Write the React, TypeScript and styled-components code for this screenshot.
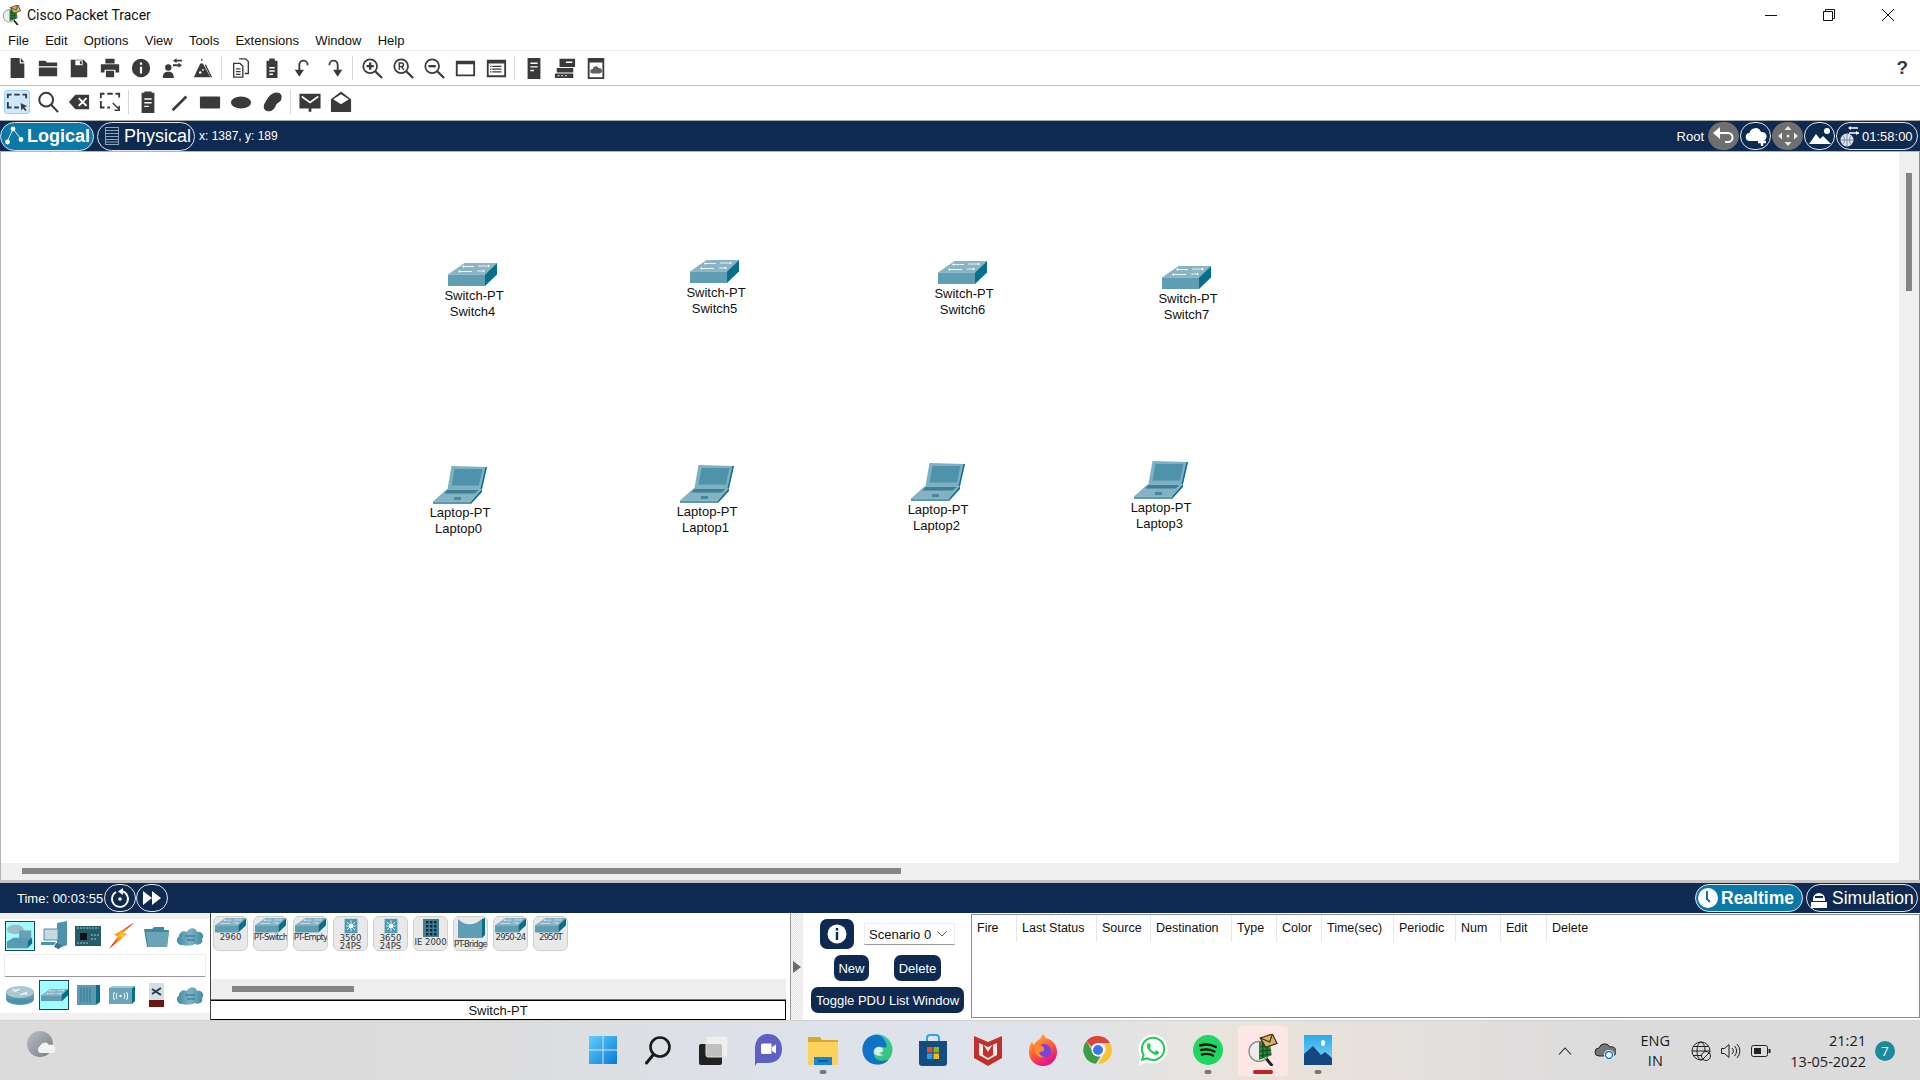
import React from 'react'
import styled, { createGlobalStyle } from 'styled-components'
import { FaWhatsapp } from 'react-icons/fa'

const NAVY = '#0f2a50'
const INK = '#3a3a3a'

const GlobalStyle = createGlobalStyle`
    html, body { margin: 0; padding: 0; background: #fff; }
    body { font-family: "Liberation Sans", Arial, sans-serif; color: #111; }
`

const BlockSvg = styled.svg`
    display: block;
`

const RackGlyph = styled.svg`
    margin: 0 2px 0 3px;
`

/* toolbar glyphs, drawn on a 24x24 grid */
const stroke = { fill: 'none', stroke: 'currentColor', strokeWidth: 2 }
const glyphs: Record<string, React.ReactNode> = {
    new: <path d="M5 1h10v6h5v16H5zM16.2 1l3.8 4.6h-3.800z" />,
    open: <path d="M2 4h7l2 2h11v4H2zM2 11.5h20V21H2z" />,
    save: <path fillRule="evenodd" d="M3 3h14l4 4v15H3zM8 3.5V9h8V3.5zM13 4.5h2V8h-2z" />,
    print: <path d="M7 2h10v5H7zM2 8h20v9h-4v-3H6v3H2zM7.5 15h9v7h-9z" />,
    info: <path fillRule="evenodd" d="M12 2a10 10 0 1 0 0 20 10 10 0 0 0 0-20zM10.8 6h2.4v2.4h-2.4zM10.8 10.5h2.4V18h-2.4z" />,
    pdu: <path d="M8 8a3.4 3.4 0 1 1 0 7 3.4 3.4 0 0 1 0-7zM2 23c0-5 2-7 6-7s6 2 6 7zM13 4l4-2.6V3h6v2h-6v1.6zM23 9l-4-2.6V8h-6v2h6v1.6z" />,
    flask: <><path d="M9 7h3l8 15H2z" /><path d="M10 1.5l2 1.5-2 1.5zM15 8l7 14h-1.6l-6.4-13z" /><circle cx="9" cy="17" r="1.4" fill="#fff" /><circle cx="12" cy="14" r="1" fill="#fff" /></>,
    copy: <g {...stroke} strokeWidth={1.5}><path d="M10 2h7l3 3v13h-4" /><path d="M4 7h7l3 3v12H4z" /><path d="M6.5 13h5M6.5 16h5M6.5 19h5" /></g>,
    paste: <path fillRule="evenodd" d="M6 4h3V1.5h6V4h3v19H6zM9 11v1.5h6V11zM9 14.5V16h6v-1.5zM9 18v1.5h4V18z" />,
    undo: <><path {...stroke} d="M17 9a4.5 4.5 0 0 0-9-1v8" /><path d="M3 14h10l-5 7.5z" /></>,
    redo: <><path {...stroke} d="M7 9a4.5 4.5 0 0 1 9-1v8" /><path d="M11 14h10l-5 7.5z" /></>,
    zoomIn: <g {...stroke} strokeWidth={1.9}><circle cx="10" cy="10" r="7.5" /><path d="M15.5 15.5L23 23" strokeWidth={2.4} /><path d="M6 10h8M10 6v8" strokeWidth={2.6} /></g>,
    zoomReset: <g {...stroke} strokeWidth={1.9}><circle cx="10" cy="10" r="7.5" /><path d="M15.5 15.5L23 23" strokeWidth={2.4} /><path d="M8 14V6.5h2.5a2 2 0 0 1 0 4H8M10.5 10.5L13 14" strokeWidth={1.6} /></g>,
    zoomOut: <g {...stroke} strokeWidth={1.9}><circle cx="10" cy="10" r="7.5" /><path d="M15.5 15.5L23 23" strokeWidth={2.4} /><path d="M6 10h8" strokeWidth={2.6} /></g>,
    window: <path fillRule="evenodd" d="M2 4h21v17H2zM4 8v11h17V8z" />,
    listWindow: <path fillRule="evenodd" d="M2 3h21v19H2zM4 7v13h17V7zM8 9.5h10V11H8zM8 12.5h10V14H8zM8 15.5h10V17H8zM5.5 9.5H7V11H5.5zM5.5 12.5H7V14H5.5zM5.5 15.5H7V17H5.5z" />,
    rack: <path fillRule="evenodd" d="M5 1h14v23H5zM8 6v1.5h8V6zM8 10v1.5h8V10zM8 14v1.5h4V14z" />,
    devices: <path fillRule="evenodd" d="M6 2h17v9H6zM13 5v1.5h7V5zM3 12h18v5H3zM1 18h20v5H1zM4 20v1h2v-1zM8 20v1h2v-1zM12 20v1h2v-1z" />,
    cloudPic: <><path fillRule="evenodd" d="M3 1h18v23H3zM5 6v16h14V6z" /><path d="M8 18a2.5 2.5 0 0 1 .5-5 3.5 3.5 0 0 1 6.5-1 3 3 0 0 1 1 6z" opacity={0.8} /></>,
    select: <g {...stroke} strokeWidth={2}><path d="M2 8V4h4M9 4h6M18 4h4v4M2 12v6h4M9 18h5" /><path d="M16 13l7 3.5-3 1.2 2.4 3-1.5 1.2-2.4-3-1.8 2.5z" fill="currentColor" stroke="none" /></g>,
    search: <g {...stroke} strokeWidth={2.2}><circle cx="10" cy="9.5" r="7.5" /><path d="M15.5 15L23 23" /></g>,
    erase: <path fillRule="evenodd" d="M8 4h15v16H8L1 12zM11 8.5l3.5 3.5L11 15.5l1.5 1.5 3.5-3.5 3.5 3.5 1.5-1.5-3.5-3.5L21 8.5 19.5 7 16 10.5 12.5 7z" />,
    resize: <g {...stroke} strokeWidth={2}><path d="M2 8V3h4M9 3h6M18 3h4v4M2 11v7h4M9 18h3" /><path d="M15 13l7 7M22 16v5h-5" strokeWidth={1.6} /></g>,
    note: <path fillRule="evenodd" d="M5 2h3V.5h8V2h3v22H5zM8 8v1.5h8V8zM8 12v1.5h8V12zM8 16v1.5h5V16z" />,
    line: <path d="M4 20L19 5l2 2L6 22z" />,
    rect: <rect x="1" y="6" width="22" height="13" rx="1" />,
    ellipse: <ellipse cx="12" cy="12.5" rx="11" ry="6.5" />,
    free: <path d="M15 2c6-1.5 9 3 7 7.5-1.5 3-4.5 3-6 6.5-1.500 4-5 7-9 6-4.500-1-5-6-2.500-9.500C7 9 9 3.500 15 2z" />,
    mailClosed: <><path d="M.5 3h23v16h-10v3.5h-3V19H.5z" /><path d="M3 6l9 6.5L21 6" fill="none" stroke="#fff" strokeWidth="1.800" /></>,
    mailOpen: <><path d="M12 .5L23 9v14H1V9z" /><path d="M12 3.5L20.5 9 12 14.5 3.5 9z" fill="#fff" /></>,
}

const topTools = ['new', 'open', 'save', 'print', 'info', 'pdu', 'flask', '|', 'copy', 'paste', 'undo', 'redo', '|', 'zoomIn', 'zoomReset', 'zoomOut', 'window', 'listWindow', '|', 'rack', 'devices', 'cloudPic']
const drawTools = ['select', 'search', 'erase', 'resize', '|', 'note', 'line', 'rect', 'ellipse', 'free', '|', 'mailClosed', 'mailOpen']

const PacketTracerLogo = ({ size }: { size: number }) => (
    <svg width={size} height={size} viewBox="0 0 24 24">
        <path d="M14 18l5 6" stroke="#222" strokeWidth="2.2" />
        <circle cx="9" cy="13" r="7.5" fill="#ececec" stroke="#8a8a8a" />
        <path d="M9 6l8-1.5 1.5 11.5-9.5 3.5z" fill="#2f8a2d" />
        <path d="M9.5 9.5l8-1M9.5 13l8.5-1M9.5 16.5l8.5-1.5M12 6v12M15 5.5v11" stroke="#143" strokeWidth=".8" />
        <path d="M10 3l9-3 3.5 7-8.5 3z" fill="#d8b266" stroke="#3d2d0e" strokeWidth=".9" />
        <path d="M10 3l7 3 2-6" fill="none" stroke="#3d2d0e" strokeWidth=".9" />
    </svg>
)

const SwitchIcon = ({ width }: { width: number }) => (
    <BlockSvg width={width} height={width * 23 / 49} viewBox="0 0 49 23">
        <path d="M0 11.5L16.5 0H49L37 11.5z" fill="#8ab4c4" />
        <path d="M0 11.5h37V23H0z" fill="#5f9db3" />
        <path d="M37 11.5L49 0v11.5L37 23z" fill="#056f8c" />
        <path d="M16 3.5h10M30 3h10M12 8.5h12M29 8h6" stroke="#e8f3f6" strokeWidth="1" />
        <path d="M40 1.5l2 1.5-2 1.5zM16 2l-2 1.5L16 5zM12 7l-2 1.5 2 1.5zM35 6.5l2 1.5-2 1.5z" fill="#fff" />
    </BlockSvg>
)

const LaptopIcon = () => (
    <BlockSvg width="54" height="38" viewBox="0 0 54 38">
        <path d="M18.5 0L54 1l-5 22H14.5z" fill="#7fb0c1" />
        <path d="M54 1l-5 22h-1.5L52.5 1z" fill="#0c6f8b" />
        <path d="M21.5 3h28l-3.5 16.5H18.5z" fill="#4f93ab" />
        <path d="M14 23h35L38 35.5H0z" fill="#83b3c3" />
        <path d="M14.5 24h31l-3.5 3.5H11z" fill="#3d7f96" />
        <path d="M21 31h7v3h-7z" fill="#49879c" />
        <path d="M0 35.5h38V38H0z" fill="#5b98ae" />
        <path d="M38 35.5L49 23v3L38 38z" fill="#0c6f8b" />
    </BlockSvg>
)

const ChipIcon = ({ dark }: { dark?: boolean }) => (
    <BlockSvg width="20" height="20" viewBox="0 0 20 20">
        <rect x="2" y="1" width="16" height="18" fill={dark ? '#3f7f94' : '#4f9bb5'} />
        {dark
            ? [4, 8, 12, 16].map((y) => [5, 9, 13].map((x) => <rect key={`${x}-${y}`} x={x} y={y - 1} width="2.4" height="2.4" fill="#123" />))
            : <path d="M10 3v14M4 10h12M5 5l10 10M15 5L5 15" stroke="#dff1f6" strokeWidth="1.2" />}
        {!dark && <circle cx="10" cy="10" r="2.4" fill="#fff" />}
    </BlockSvg>
)

const CloudShape = () => (
    <BlockSvg width="28" height="19" viewBox="0 0 28 19">
        <defs>
            <linearGradient id="cloudFill" x1="0" x2="1">
                <stop offset="0" stopColor="#3f8ba5" />
                <stop offset=".5" stopColor="#7fb2c3" />
                <stop offset="1" stopColor="#3f8ba5" />
            </linearGradient>
        </defs>
        <path d="M6 18C1 18-1 12 3 9.5 3 5 8 3 11 5c2-5 9-5 10 0 5-1 8 4 5 7 2 4-3 7-7 5-3 2-9 2-13 1z" fill="url(#cloudFill)" />
        <path d="M9 9h10M11 13h8" stroke="#2b7088" strokeWidth="1" />
    </BlockSvg>
)

const categoryRowOne: React.ReactNode[] = [
    <svg width="28" height="28" viewBox="0 0 30 30"><ellipse cx="10" cy="8" rx="9" ry="5" fill="#9dbcc8" /><rect x="14" y="9" width="13" height="11" fill="#6aa2b5" /><path d="M1 21l7-4h20l-5 4v7H1z" fill="#5b9ab1" /><path d="M23 21l5-4v6l-5 5z" fill="#0a6d89" /></svg>,
    <svg width="28" height="30" viewBox="0 0 28 30"><path d="M17 2l10-2v24l-10 4z" fill="#4f93ab" /><path d="M4 8h14v11H4z" fill="#c5dbe3" stroke="#4d8ca2" /><path d="M1 21h15l-2 3H1z" fill="#4f93ab" /><path d="M16 22l6 2-3 4-5-2z" fill="#2c7a93" /></svg>,
    <svg width="26" height="20" viewBox="0 0 26 20"><rect width="26" height="20" fill="#255c68" /><rect x="5" y="7" width="7" height="7" fill="#111" /><path d="M2 2h22M2 17h12M16 9h8M16 13h6" stroke="#8fc7d6" strokeWidth="1" strokeDasharray="2 1" /></svg>,
    <svg width="28" height="28" viewBox="0 0 28 28"><defs><radialGradient id="bolt"><stop offset="0" stopColor="#ffd21f" /><stop offset="1" stopColor="#f02a12" /></radialGradient></defs><path d="M27 0L15 11l4 1L1 27l9-13-4-1z" fill="url(#bolt)" /></svg>,
    <svg width="27" height="21" viewBox="0 0 27 21"><path d="M1 3h8l2-2h10v3h5l-2 17H4z" fill="#3e8aa4" /><path d="M3 6h23l-2 15H5z" fill="#6ba3b7" /></svg>,
    <CloudShape />,
]

const categoryRowTwo: React.ReactNode[] = [
    <svg width="28" height="19" viewBox="0 0 28 19"><ellipse cx="14" cy="13" rx="14" ry="6" fill="#4f93ab" /><rect y="6" width="28" height="7" fill="#5f9db3" /><ellipse cx="14" cy="6" rx="14" ry="6" fill="#a9c8d3" /><path d="M8 6l6-3M14 9l7-3M6 4h5M17 8h5" stroke="#fff" strokeWidth="1" /></svg>,
    <SwitchIcon width={27} />,
    <svg width="23" height="20" viewBox="0 0 23 20"><rect width="19" height="20" y="0" fill="#5b9ab1" /><path d="M19 0l4-1v18l-4 3z" fill="#0a6d89" /><path d="M4 3v14M7 3v14M10 3v14M13 3v14" stroke="#2c7a93" strokeWidth="1" /></svg>,
    <svg width="26" height="18" viewBox="0 0 26 18"><rect y="2" width="23" height="16" fill="#6ba3b7" /><path d="M23 2l3-2v15l-3 3z" fill="#0a6d89" /><path d="M0 2l3-2h23l-3 2z" fill="#a3c5d1" /><circle cx="11.5" cy="10" r="1.2" fill="#fff" /><path d="M8 7c-1 2-1 4 0 6M15 7c1 2 1 4 0 6M5.5 6c-1.5 2.5-1.5 5.5 0 8M17.5 6c1.5 2.5 1.5 5.5 0 8" stroke="#fff" fill="none" /></svg>,
    <svg width="15" height="24" viewBox="0 0 15 24"><rect width="15" height="17" fill="#cfe0e6" /><rect y="17" width="15" height="7" fill="#6b1512" /><path d="M3 6l9 6M3 11l9-6" stroke="#334" strokeWidth="2" /></svg>,
    <CloudShape />,
]

type Device = { label: string; kind: 'switch' | 'chip' | 'ie' | 'bridge'; tight?: boolean }
const devices: Device[] = [
    { label: '2960', kind: 'switch' },
    { label: 'PT-Switch', kind: 'switch', tight: true },
    { label: 'PT-Empty', kind: 'switch', tight: true },
    { label: '3560\n24PS', kind: 'chip' },
    { label: '3650\n24PS', kind: 'chip' },
    { label: 'IE 2000', kind: 'ie' },
    { label: 'PT-Bridge', kind: 'bridge', tight: true },
    { label: '2950-24', kind: 'switch', tight: true },
    { label: '2950T', kind: 'switch', tight: true },
]

const pduColumns: [string, number][] = [
    ['Fire', 45], ['Last Status', 80], ['Source', 54], ['Destination', 81], ['Type', 45], ['Color', 45],
    ['Time(sec)', 72], ['Periodic', 62], ['Num', 45], ['Edit', 46], ['Delete', 60],
]

function WhatsappMark({ children }: { children: React.ReactNode }) {
    return (
        <svg width="30" height="32" viewBox="0 0 30 32">
            <circle cx="15" cy="15" r="14.5" fill="#fff" />
            <path d="M3 22l-2 9 9-3z" fill="#fff" />
            <foreignObject x="1" y="1" width="28" height="28">{children}</foreignObject>
        </svg>
    )
}

const taskIcons: { icon: React.ReactNode; dot?: boolean; active?: boolean }[] = [
    { icon: <svg width="30" height="30" viewBox="0 0 30 30"><defs><linearGradient id="win" x1="0" y1="0" x2="1" y2="1"><stop offset="0" stopColor="#5fd0fb" /><stop offset="1" stopColor="#0a7ad8" /></linearGradient></defs><path d="M1 1h13.5v13.5H1zM15.5 1H29v13.5H15.5zM1 15.5h13.5V29H1zM15.5 15.5H29V29H15.5z" fill="url(#win)" /></svg> },
    { icon: <svg width="30" height="30" viewBox="0 0 30 30"><circle cx="17" cy="12" r="9.5" fill="none" stroke="#1a1a1a" strokeWidth="2.6" /><path d="M10.5 19.5L3.5 28" stroke="#1a1a1a" strokeWidth="3" strokeLinecap="round" /></svg> },
    { icon: <svg width="30" height="30" viewBox="0 0 30 30"><rect x="1" y="9" width="23" height="21" rx="2" fill="#222" /><rect x="8" y="1" width="22" height="21" rx="2" fill="#f4f4f4" fillOpacity=".75" stroke="#ddd" /></svg> },
    { icon: <svg width="30" height="32" viewBox="0 0 30 32"><path d="M15 0c8 0 14 6 14 15s-6 14-14 14H4l-2 3V15C2 6 7 0 15 0z" fill="#5f5fc4" /><path d="M8 11a1.5 1.5 0 0 1 1.5-1.5h9V20h-9A1.5 1.5 0 0 1 8 18.5zM19 13l4-2.5v9L19 17z" fill="#fff" /></svg> },
    { icon: <svg width="30" height="30" viewBox="0 0 30 30"><path d="M0 2h12l2 3h16v7H0z" fill="#dca531" /><path d="M0 7h30v23H0z" fill="#fbd35a" /><rect x="6" y="22" width="18" height="8" fill="#1683d8" /><rect x="10" y="25" width="10" height="2" fill="#0c5f9f" /></svg>, dot: true },
    { icon: <svg width="31" height="31" viewBox="0 0 31 31"><defs><linearGradient id="edge" x1="0" y1="0" x2="1" y2="1"><stop offset="0" stopColor="#3fd3c0" /><stop offset="1" stopColor="#36c06a" /></linearGradient></defs><circle cx="15.5" cy="15.5" r="15" fill="url(#edge)" /><path d="M15.5 .5C7 .5 .5 7 .5 15.5c0 9 7 15 15 15 5 0 9-2 11-5-6 3-14 1-15-6-1-5 3-7 6-7 3 0 6 2 7 0 1-3-4-12-9.5-12z" fill="#0f74c8" /><path d="M12 18c0-4 3-5 5-5s4 1 4 3-2 3-4 3c1 1 3 2 5 2-5 2-10 0-10-3z" fill="#d9f1f4" /></svg> },
    { icon: <svg width="30" height="32" viewBox="0 0 30 32"><path d="M9 7V4a3 3 0 0 1 3-3h6a3 3 0 0 1 3 3v3" fill="none" stroke="#2ba8e0" strokeWidth="2" /><path d="M1 7h28v22a3 3 0 0 1-3 3H4a3 3 0 0 1-3-3z" fill="#144b80" /><path d="M9 13h5.5v5.5H9z" fill="#ea4c24" /><path d="M15.5 13H21v5.5h-5.5z" fill="#7db923" /><path d="M9 19.5h5.5V25H9z" fill="#1ea3e0" /><path d="M15.5 19.5H21V25h-5.5z" fill="#fcb712" /></svg> },
    { icon: <svg width="28" height="32" viewBox="0 0 28 32"><path d="M0 2l14 6 14-6v22l-14 8L0 24z" fill="#c3302a" /><path d="M5 9l9 4 9-4v12l-9 5-9-5z" fill="#f0ece8" /><path d="M9 10l5 8 5-8v11l-5 3-5-3z" fill="#c3302a" /></svg> },
    { icon: <svg width="30" height="32" viewBox="0 0 30 32"><defs><linearGradient id="fox" x1="0" y1="0" x2=".5" y2="1"><stop offset="0" stopColor="#ffc22d" /><stop offset=".6" stopColor="#ff5a35" /><stop offset="1" stopColor="#e31587" /></linearGradient></defs><path d="M15 4c8 0 14 6 14 14s-6 14-14 14S1 26 1 18c0-4 1-8 3-10l2 3c1-3 4-5 6-6l3-5 3 4z" fill="url(#fox)" /><circle cx="16" cy="17" r="7" fill="#7542e5" /><path d="M7 12c3-2 8-1 9 2s-2 4-4 4 1 5 5 5c-6 2-12-3-10-11z" fill="#ff8a2d" /></svg> },
    { icon: <svg width="30" height="30" viewBox="0 0 30 30"><path d="M15 1a14 14 0 0 1 12 7H15a7 7 0 0 0-6.5 4L3.5 6A14 14 0 0 1 15 1z" fill="#dc4437" /><path d="M27 8a14 14 0 0 1-12 21l6-10a7 7 0 0 0-1-11z" fill="#fbc02d" /><path d="M3.5 6l6 10a7 7 0 0 0 8 5.5L13 28.8A14 14 0 0 1 3.5 6z" fill="#3e9b47" /><circle cx="15" cy="15" r="6.5" fill="#fff" /><circle cx="15" cy="15" r="5" fill="#3b78e7" /></svg> },
    { icon: <WhatsappMark><FaWhatsapp size={28} color="#25c955" /></WhatsappMark> },
    { icon: <svg width="30" height="30" viewBox="0 0 30 30"><circle cx="15" cy="15" r="15" fill="#1ed760" /><path d="M7 10.5c5-1.5 11-1 16 1.5M8 15c4-1 9-.8 13.5 1.5M9 19.5c4-1 8-.6 11 1" fill="none" stroke="#111" strokeWidth="2.4" strokeLinecap="round" /></svg>, dot: true },
    { icon: <PacketTracerLogo size={32} />, active: true },
    { icon: <svg width="28" height="30" viewBox="0 0 28 30"><defs><linearGradient id="sky" x1="0" y1="0" x2="0" y2="1"><stop offset="0" stopColor="#2aa9e8" /><stop offset="1" stopColor="#8ad8f5" /></linearGradient></defs><rect width="28" height="30" fill="url(#sky)" /><ellipse cx="19" cy="8" rx="2" ry="3" fill="#fff" /><path d="M0 30V19l9-8 8 9 4-3 7 6v7z" fill="#14487f" /></svg>, dot: true },
]

const Page = styled.div`
    width: 1920px;
    height: 1080px;
    display: flex;
    flex-direction: column;
    overflow: hidden;
    background: #fff;
`

const TitleBar = styled.div`
    height: 30px;
    display: flex;
    align-items: center;
    padding-left: 2px;
`

const TitleText = styled.span`
    margin-left: 5px;
    font: 14px Roboto, sans-serif;
    color: #111;
    flex: 1;
`

const WindowControl = styled.div`
    width: 58.5px;
    height: 30px;
    display: flex;
    align-items: center;
    justify-content: center;
    &:last-child { margin-right: 3px; }
`

const MenuBar = styled.div`
    height: 20px;
    display: flex;
    align-items: center;
    gap: 16.2px;
    padding-left: 8px;
    font-size: 13px;
    border-bottom: 1px solid #f0f0f0;
`

const Toolbar = styled.div<{ $height: number; $ruled?: boolean }>`
    height: ${(p) => p.$height}px;
    box-sizing: border-box;
    display: flex;
    align-items: center;
    padding-left: 1px;
    padding-bottom: ${(p) => (p.$ruled ? 0 : 2)}px;
    color: ${INK};
    border-bottom: ${(p) => (p.$ruled ? '1px solid #bdbdbd' : 'none')};
`

const ToolButton = styled.div<{ $active?: boolean }>`
    width: ${(p) => (p.$active ? 26 : 31)}px;
    height: ${(p) => (p.$active ? 24 : 28)}px;
    margin: 0 ${(p) => (p.$active ? 2.5 : 0)}px;
    box-sizing: border-box;
    display: flex;
    align-items: center;
    justify-content: center;
    border-radius: 3px;
    background: ${(p) => (p.$active ? '#cde8ff' : 'transparent')};
    border: 1px solid ${(p) => (p.$active ? '#99d1ff' : 'transparent')};
    svg { width: 22px; height: 22px; flex: none; fill: currentColor; }
`

const ToolRule = styled.div`
    width: 1px;
    height: 24px;
    background: #d5d5d5;
    margin: 0 3px;
`

const HelpMark = styled.span`
    margin-left: auto;
    margin-right: 12px;
    font: bold 19px "Liberation Sans", sans-serif;
    color: ${INK};
`

const NavBar = styled.div`
    height: 30px;
    background: ${NAVY};
    border-top: 1px solid #a9a9a9;
    border-bottom: 1px solid #b5b5b5;
    display: flex;
    align-items: center;
    gap: 3px;
    padding-right: 2px;
    color: #fff;
`

const ModePill = styled.div<{ $active?: boolean; $width: number }>`
    width: ${(p) => p.$width}px;
    height: 29px;
    box-sizing: border-box;
    display: flex;
    align-items: center;
    gap: 3px;
    padding-left: 4px;
    border-radius: 15px;
    border: 1px solid #dfe6ee;
    background: ${(p) => (p.$active ? '#0b78a8' : NAVY)};
    color: #fff;
    font-size: 18px;
    font-weight: ${(p) => (p.$active ? 700 : 400)};
    flex: none;
`

const CoordText = styled.span`
    margin-left: 1px;
    font-size: 12px;
    flex: 1;
`

const RootLabel = styled.span`
    font-size: 13px;
    margin-right: 3px;
`

const RoundButton = styled.div<{ $grey?: boolean }>`
    width: 31px;
    height: 28px;
    box-sizing: border-box;
    margin-left: -2px;
    display: flex;
    align-items: center;
    justify-content: center;
    border-radius: 14px;
    border: 1px solid ${(p) => (p.$grey ? '#6f6f6f' : '#dfe6ee')};
    background: ${(p) => (p.$grey ? '#6f6f6f' : NAVY)};
`

const ClockPill = styled.div`
    width: 82px;
    height: 28px;
    box-sizing: border-box;
    margin-left: -2px;
    display: flex;
    align-items: center;
    gap: 2px;
    padding-left: 3px;
    border-radius: 14px;
    border: 1px solid #dfe6ee;
    font-size: 13px;
`

const CanvasRow = styled.div`
    flex: 1;
    display: flex;
    min-height: 0;
`

const CanvasColumn = styled.div`
    flex: 1;
    display: flex;
    flex-direction: column;
    border-left: 1px solid #b5b5b5;
`

const Workspace = styled.div`
    flex: 1;
    position: relative;
`

const HScroll = styled.div`
    height: 17px;
    box-sizing: border-box;
    padding: 5px 0 0 21px;
    background: #f0f0f0;
`

const HThumb = styled.div`
    width: 879px;
    height: 6px;
    background: #858585;
`

const VScroll = styled.div`
    width: 21px;
    box-sizing: border-box;
    padding: 21px 0 0 7px;
    background: #f0f0f0;
    border-right: 1px solid #8c8c94;
`

const VThumb = styled.div`
    width: 6px;
    height: 118px;
    background: #858585;
`

const Node = styled.div<{ $x: number; $y: number }>`
    position: absolute;
    left: ${(p) => p.$x}px;
    top: ${(p) => p.$y}px;
    width: 100px;
    display: flex;
    flex-direction: column;
    align-items: center;
    font-size: 13px;
    line-height: 16px;
    color: #111;
`

const NodeGlyph = styled.div<{ $shift: number; $gap: number }>`
    margin-left: ${(p) => p.$shift}px;
    margin-bottom: ${(p) => p.$gap}px;
`

const NodeName = styled.span`
    margin-right: 3px;
`

const SimBar = styled.div`
    height: 30px;
    background: ${NAVY};
    border-top: 3px solid #c4c4c4;
    display: flex;
    align-items: center;
    padding: 0 2px 0 17px;
    color: #fff;
    font-size: 13px;
`

const SimClock = styled.span`
    margin-right: 1px;
`

const SimButton = styled.div`
    width: 32px;
    height: 28px;
    box-sizing: border-box;
    display: flex;
    align-items: center;
    justify-content: center;
    border-radius: 14px;
    border: 1px solid #dfe6ee;
`

const SimModes = styled.div`
    margin-left: auto;
    display: flex;
    gap: 3px;
`

const SimMode = styled(ModePill)`
    height: 28px;
    padding-left: 1px;
    gap: 2px;
    font-size: 17.5px;
`

const Panel = styled.div`
    height: 107px;
    display: flex;
    background: #fff;
`

const Picker = styled.div`
    width: 210px;
    box-sizing: border-box;
    padding: 6px 0 7px;
    background: #f0f0f0;
`

const PickerInner = styled.div`
    height: 94px;
    background: #fff;
    display: flex;
    flex-direction: column;
`

const CategoryRow = styled.div<{ $height: number }>`
    height: ${(p) => p.$height}px;
    display: flex;
    align-items: center;
    padding-left: 3px;
`

const CategoryCell = styled.div<{ $selected?: boolean }>`
    width: 34px;
    display: flex;
    justify-content: center;
    & > div {
        width: 30px;
        height: 30px;
        box-sizing: border-box;
        display: flex;
        align-items: center;
        justify-content: center;
        background: ${(p) => (p.$selected ? '#9ffcff' : 'transparent')};
        border: 1px solid ${(p) => (p.$selected ? '#1d4a55' : 'transparent')};
    }
`

const SearchSlot = styled.div`
    height: 23px;
    margin: 1px 4px 0;
    box-sizing: border-box;
    border: 1px solid #ececec;
    border-bottom: 1px solid #999;
    border-radius: 2px;
`

const DevicePanel = styled.div`
    width: 576px;
    display: flex;
    flex-direction: column;
    border-left: 1px solid #444;
    box-sizing: border-box;
`

const DeviceList = styled.div`
    height: 66px;
    box-sizing: border-box;
    padding: 3px 0 0 2px;
    display: flex;
    gap: 5px;
`

const DeviceCell = styled.div`
    width: 35px;
    height: 35px;
    box-sizing: border-box;
    border: 1px solid #cfcfcf;
    border-radius: 6px;
    background: #e9e9e9;
    display: flex;
    flex-direction: column;
    align-items: center;
    padding-top: 1px;
    overflow: hidden;
`

const DeviceLabel = styled.span<{ $tight?: boolean }>`
    font: 8.5px/7.5px "DejaVu Sans", sans-serif;
    letter-spacing: ${(p) => (p.$tight ? '-0.8px' : '0')};
    white-space: pre;
    text-align: center;
    color: #333;
    margin-top: 1px;
`

const DeviceScroll = styled.div`
    height: 21px;
    box-sizing: border-box;
    padding: 7px 0 0 21px;
    background: #eeeeee;
    border-bottom: 1px solid #777;
`

const DeviceThumb = styled.div`
    width: 122px;
    height: 6px;
    background: #858585;
`

const DeviceName = styled.div`
    height: 20px;
    box-sizing: border-box;
    border: 1px solid #000;
    border-left: none;
    text-align: center;
    font-size: 13px;
    line-height: 19px;
`

const Collapser = styled.div`
    width: 12px;
    margin-left: 4px;
    display: flex;
    align-items: center;
    justify-content: center;
    border-left: 1px solid #999;
    background: repeating-conic-gradient(#e4e4e4 0% 25%, #fafafa 0% 50%) 0 0 / 2px 2px;
`

const CollapseArrow = styled.div`
    width: 0;
    height: 0;
    border-left: 8px solid #6a6a6a;
    border-top: 6px solid transparent;
    border-bottom: 6px solid transparent;
    margin-top: 1px;
`

const ScenarioPanel = styled.div`
    width: 168px;
    box-sizing: border-box;
    padding-top: 6px;
    display: flex;
    flex-direction: column;
    gap: 6px;
`

const ScenarioTop = styled.div`
    display: flex;
    align-items: center;
    gap: 10px;
    padding-left: 17px;
    height: 30px;
`

const InfoButton = styled.div`
    width: 34px;
    height: 30px;
    border-radius: 7px;
    background: ${NAVY};
    display: flex;
    align-items: center;
    justify-content: center;
`

const ScenarioSelect = styled.div`
    width: 91px;
    height: 22px;
    box-sizing: border-box;
    border: 1px solid #ececec;
    border-bottom: 1px solid #999;
    display: flex;
    align-items: center;
    justify-content: space-between;
    padding: 0 7px 0 4px;
    font-size: 13px;
`

const ScenarioActions = styled.div`
    display: flex;
    gap: 25px;
    padding-left: 31px;
`

const PduButton = styled.div<{ $width: number; $left?: number }>`
    width: ${(p) => p.$width}px;
    height: 26px;
    margin-left: ${(p) => p.$left ?? 0}px;
    border-radius: 7px;
    background: ${NAVY};
    color: #fff;
    display: flex;
    align-items: center;
    justify-content: center;
    font-size: 13px;
`

const PduTable = styled.div`
    flex: 1;
    box-sizing: border-box;
    margin: 1px 0 2px;
    border: 1px solid #8c8c94;
`

const PduHead = styled.div`
    height: 27px;
    display: flex;
`

const PduCol = styled.div<{ $width: number }>`
    width: ${(p) => p.$width}px;
    box-sizing: border-box;
    padding: 6px 0 0 5px;
    font-size: 12.5px;
    color: #111;
    border-right: 1px solid #e8e8e8;
    white-space: nowrap;
    &:last-child { border-right: none; }
`

const Taskbar = styled.div`
    height: 60px;
    display: grid;
    grid-template-columns: 1fr auto 1fr;
    align-items: center;
    background: linear-gradient(90deg, #dbdbdb 0%, #dcdcdc 24%, #dde1e9 40%, #dfe3eb 54%, #ebe3da 66%, #e2dfde 76%, #dbdbdb 85%, #dbdbdb 100%);
    border-top: 1px solid #d2d2d2;
    box-sizing: border-box;
`

const Weather = styled.div`
    padding: 0 0 11px 27px;
    display: flex;
`

const TaskIcons = styled.div`
    display: flex;
`

const TaskItem = styled.div<{ $active?: boolean }>`
    position: relative;
    width: 55px;
    height: 50px;
    box-sizing: border-box;
    padding-bottom: 2px;
    display: flex;
    align-items: center;
    justify-content: center;
    &::before {
        content: '';
        position: absolute;
        inset: 0 2.5px;
        border-radius: 4px;
        background: ${(p) => (p.$active ? '#fce6e6' : 'transparent')};
    }
    & > * { position: relative; }
`

const TaskDot = styled.span<{ $active?: boolean }>`
    position: absolute !important;
    left: 50%;
    bottom: 2px;
    transform: translateX(-50%);
    width: ${(p) => (p.$active ? 20 : 7)}px;
    height: 4px;
    border-radius: 2px;
    background: ${(p) => (p.$active ? '#c4261d' : '#777')};
`

const Tray = styled.div`
    display: flex;
    align-items: center;
    justify-content: flex-end;
    padding-right: 25px;
    font-family: "Open Sans", sans-serif;
    font-size: 14.5px;
    color: #1a1a1a;
`

const TrayIcon = styled.div<{ $width: number }>`
    width: ${(p) => p.$width}px;
    display: flex;
    justify-content: center;
`

const LangBlock = styled.div`
    width: 40px;
    margin: 0 11px 0 3px;
    text-align: center;
    line-height: 20px;
`

const ClockBlock = styled.div`
    margin-left: 14px;
    text-align: right;
    line-height: 21px;
`

const NotifyBadge = styled.div`
    width: 20px;
    height: 20px;
    margin-left: 9px;
    border-radius: 50%;
    background: #1b8a9e;
    color: #fff;
    display: flex;
    align-items: center;
    justify-content: center;
    font-size: 13px;
`

const renderTools = (tools: string[], prefix: string, activeName?: string) =>
    tools.map((name, i) => {
        if (name === '|') return <ToolRule key={`${prefix}${i}`} />
        return (
            <ToolButton key={name} $active={name === activeName}>
                <svg viewBox="0 0 24 24">{glyphs[name]}</svg>
            </ToolButton>
        )
    })

const nodes = [
    { x: 423, y: 111, type: 'switch', name: 'Switch4' },
    { x: 665, y: 108, type: 'switch', name: 'Switch5' },
    { x: 913, y: 109, type: 'switch', name: 'Switch6' },
    { x: 1137, y: 114, type: 'switch', name: 'Switch7' },
    { x: 409, y: 314, type: 'laptop', name: 'Laptop0' },
    { x: 656, y: 313, type: 'laptop', name: 'Laptop1' },
    { x: 887, y: 311, type: 'laptop', name: 'Laptop2' },
    { x: 1110, y: 309, type: 'laptop', name: 'Laptop3' },
]

const App = () => {
    return (
        <Page>
            <GlobalStyle />
            <TitleBar>
                <PacketTracerLogo size={20} />
                <TitleText>Cisco Packet Tracer</TitleText>
                <WindowControl><svg width="12" height="12"><path d="M0 6.5h12" stroke="#111" /></svg></WindowControl>
                <WindowControl><svg width="12" height="12"><path d="M.5 2.5h9v9h-9zM2.5 2.5V.5h9v9H9.5" fill="none" stroke="#111" /></svg></WindowControl>
                <WindowControl><svg width="12" height="12"><path d="M0 0l12 12M12 0L0 12" stroke="#111" /></svg></WindowControl>
            </TitleBar>
            <MenuBar>
                {['File', 'Edit', 'Options', 'View', 'Tools', 'Extensions', 'Window', 'Help'].map((m) => <span key={m}>{m}</span>)}
            </MenuBar>
            <Toolbar $height={35} $ruled>
                {renderTools(topTools, 'top')}
                <HelpMark>?</HelpMark>
            </Toolbar>
            <Toolbar $height={34}>
                {renderTools(drawTools, 'draw', 'select')}
            </Toolbar>
            <NavBar>
                <ModePill $active $width={94}>
                    <svg width="19" height="20" viewBox="0 0 19 20"><path d="M8 3L2 16M8 3l8 10" stroke="#e4eff5" /><circle cx="8" cy="3" r="2.4" fill="#fff" /><circle cx="2.5" cy="16" r="2.4" fill="#fff" /><circle cx="16" cy="13.5" r="2.4" fill="#fff" /></svg>
                    Logical
                </ModePill>
                <ModePill $width={98}>
                    <RackGlyph width="14" height="18" viewBox="0 0 14 18"><rect x=".5" y=".5" width="13" height="17" fill="none" stroke="#8fa3bd" /><path d="M1 3.5h12M1 6.5h12M1 9.5h12M1 12.5h12M1 15h12" stroke="#8fa3bd" /></RackGlyph>
                    Physical
                </ModePill>
                <CoordText>x: 1387, y: 189</CoordText>
                <RootLabel>Root</RootLabel>
                <RoundButton $grey><svg width="24" height="20" viewBox="0 0 24 20"><path d="M3 7h13a4.5 4.5 0 0 1 0 9h-3" fill="none" stroke="#fff" strokeWidth="2" /><path d="M8 1v12L1 7z" fill="#fff" /></svg></RoundButton>
                <RoundButton><svg width="24" height="22" viewBox="0 0 24 22"><path d="M6 16a4 4 0 0 1-.5-8 6 6 0 0 1 11.5-1 4.5 4.5 0 0 1 2 9z" fill="#fff" /><path d="M18 13v8M14 17h8" stroke="#fff" strokeWidth="2.4" /></svg></RoundButton>
                <RoundButton $grey><svg width="22" height="22" viewBox="0 0 22 22" fill="#e8e8e8"><path d="M11 1l3.5 4h-7zM11 21l-3.5-4h7zM1 11l4-3.5v7zM21 11l-4 3.5v-7z" /><circle cx="11" cy="11" r="1.5" /></svg></RoundButton>
                <RoundButton><svg width="24" height="20" viewBox="0 0 24 20" fill="#fff"><path d="M1 18l7-10 4 5 3-3 8 8z" /><circle cx="19" cy="5" r="3" /></svg></RoundButton>
                <ClockPill>
                    <svg width="20" height="24" viewBox="0 0 20 24"><circle cx="7" cy="16" r="6.5" fill="#dde4ec" /><path d="M1 16h12M7 10v12M3 11.5c2 3 2 6 0 9M11 11.5c-2 3-2 6 0 9" stroke="#4f6a8c" strokeWidth=".7" fill="none" /><path d="M9 4h9M9 9h10" stroke="#fff" strokeWidth="1.5" /><path d="M11 2L8 4l3 2zM16 7l3 2-3 2z" fill="#fff" /></svg>
                    01:58:00
                </ClockPill>
            </NavBar>
            <CanvasRow>
                <CanvasColumn>
                    <Workspace>
                        {nodes.map((n) => (
                            <Node key={n.name} $x={n.x} $y={n.y}>
                                {n.type === 'switch'
                                    ? <NodeGlyph $shift={-3} $gap={2}><SwitchIcon width={49} /></NodeGlyph>
                                    : <NodeGlyph $shift={-1} $gap={1}><LaptopIcon /></NodeGlyph>}
                                <span>{n.type === 'switch' ? 'Switch-PT' : 'Laptop-PT'}</span>
                                <NodeName>{n.name}</NodeName>
                            </Node>
                        ))}
                    </Workspace>
                    <HScroll><HThumb /></HScroll>
                </CanvasColumn>
                <VScroll><VThumb /></VScroll>
            </CanvasRow>
            <SimBar>
                <SimClock>Time: 00:03:55</SimClock>
                <SimButton>
                    <svg width="20" height="22" viewBox="0 0 20 22"><path d="M6 5a8 8 0 1 0 6-.8" fill="none" stroke="#fff" strokeWidth="1.8" /><path d="M13 1v7L8 4.5z" fill="#fff" /><circle cx="10" cy="12" r="1.8" fill="#fff" /></svg>
                </SimButton>
                <SimButton>
                    <svg width="20" height="14" viewBox="0 0 20 14" fill="#fff"><path d="M1 0l9 7-9 7zM10 0l9 7-9 7z" /></svg>
                </SimButton>
                <SimModes>
                    <SimMode $active $width={108}>
                        <svg width="22" height="22" viewBox="0 0 22 22"><circle cx="11" cy="11" r="10" fill="#fff" /><path d="M10 4v8l3 3" fill="none" stroke="#0b78a8" strokeWidth="2" /></svg>
                        Realtime
                    </SimMode>
                    <SimMode $width={112}>
                        <svg width="22" height="22" viewBox="0 0 22 22" fill="#fff"><path d="M5 12a6 6 0 0 1 12 0v2H5zM3 15h16v6H3z" /><path d="M7 9h8v2H7z" fill={NAVY} /></svg>
                        Simulation
                    </SimMode>
                </SimModes>
            </SimBar>
            <Panel>
                <Picker>
                    <PickerInner>
                        <CategoryRow $height={34}>
                            {categoryRowOne.map((icon, i) => <CategoryCell key={i} $selected={i === 0}><div>{icon}</div></CategoryCell>)}
                        </CategoryRow>
                        <SearchSlot />
                        <CategoryRow $height={36}>
                            {categoryRowTwo.map((icon, i) => <CategoryCell key={i} $selected={i === 1}><div>{icon}</div></CategoryCell>)}
                        </CategoryRow>
                    </PickerInner>
                </Picker>
                <DevicePanel>
                    <DeviceList>
                        {devices.map((d) => (
                            <DeviceCell key={d.label}>
                                {d.kind === 'switch' && <SwitchIcon width={31} />}
                                {d.kind === 'chip' && <ChipIcon />}
                                {d.kind === 'ie' && <ChipIcon dark />}
                                {d.kind === 'bridge' && (
                                    <svg width="28" height="22" viewBox="0 0 28 22"><path d="M1 1c7 7 16 7 24 0v19H1z" fill="#5f9db3" /><path d="M25 1l3-1v17l-3 3z" fill="#0a6d89" /></svg>
                                )}
                                <DeviceLabel $tight={d.tight}>{d.label}</DeviceLabel>
                            </DeviceCell>
                        ))}
                    </DeviceList>
                    <DeviceScroll><DeviceThumb /></DeviceScroll>
                    <DeviceName>Switch-PT</DeviceName>
                </DevicePanel>
                <Collapser><CollapseArrow /></Collapser>
                <ScenarioPanel>
                    <ScenarioTop>
                        <InfoButton>
                            <svg width="22" height="22" viewBox="0 0 22 22"><circle cx="11" cy="11" r="9.5" fill="#fff" /><path d="M9.8 5h2.4v2.4H9.8zM9.8 9h2.4v8H9.8z" fill={NAVY} /></svg>
                        </InfoButton>
                        <ScenarioSelect>
                            Scenario 0
                            <svg width="10" height="6" viewBox="0 0 10 6"><path d="M.5.5L5 5 9.5.5" fill="none" stroke="#555" /></svg>
                        </ScenarioSelect>
                    </ScenarioTop>
                    <ScenarioActions>
                        <PduButton $width={35}>New</PduButton>
                        <PduButton $width={47}>Delete</PduButton>
                    </ScenarioActions>
                    <PduButton $width={153} $left={8}>Toggle PDU List Window</PduButton>
                </ScenarioPanel>
                <PduTable>
                    <PduHead>
                        {pduColumns.map(([title, width]) => <PduCol key={title} $width={width}>{title}</PduCol>)}
                    </PduHead>
                </PduTable>
            </Panel>
            <Taskbar>
                <Weather>
                    <svg width="28" height="28" viewBox="0 0 28 28">
                        <defs><linearGradient id="moon" x1="0" y1="0" x2="1" y2="1"><stop offset="0" stopColor="#b9bdc4" /><stop offset="1" stopColor="#777c85" /></linearGradient></defs>
                        <circle cx="13" cy="13" r="13" fill="url(#moon)" />
                        <path d="M13 22a4 4 0 0 1 0-7 5 5 0 0 1 9-1 4 4 0 0 1 4 8z" fill="#f3f3f3" />
                    </svg>
                </Weather>
                <TaskIcons>
                    {taskIcons.map((t, i) => (
                        <TaskItem key={i} $active={t.active}>
                            {t.icon}
                            {t.dot && <TaskDot />}
                            {t.active && <TaskDot $active />}
                        </TaskItem>
                    ))}
                </TaskIcons>
                <Tray>
                    <TrayIcon $width={26}><svg width="14" height="8" viewBox="0 0 14 8"><path d="M1 7.5L7 1l6 6.5" fill="none" stroke="#222" strokeWidth="1.1" /></svg></TrayIcon>
                    <TrayIcon $width={54}>
                        <svg width="22" height="20" viewBox="0 0 22 20"><path d="M5 15a4 4 0 0 1 0-8 6 6 0 0 1 11-1 4.5 4.5 0 0 1 3 9z" fill="#777" stroke="#222" /><circle cx="15" cy="14" r="5" fill="#fff" /><circle cx="15" cy="14" r="3.5" fill="none" stroke="#0a74da" strokeWidth="1.4" /></svg>
                    </TrayIcon>
                    <LangBlock>ENG<br />IN</LangBlock>
                    <TrayIcon $width={30}>
                        <svg width="20" height="20" viewBox="0 0 20 20" fill="none" stroke="#222"><circle cx="10" cy="10" r="9" /><ellipse cx="10" cy="10" rx="4" ry="9" /><path d="M1 10h18M2 5.5h16M2 14.5h16" /><circle cx="15" cy="15" r="4.5" fill="#dcdcdc" /><path d="M12 18l6-6" /></svg>
                    </TrayIcon>
                    <TrayIcon $width={30}>
                        <svg width="20" height="16" viewBox="0 0 20 16" fill="none" stroke="#222"><path d="M.5 5.5h3L8 1.5v13l-4.5-4h-3z" /><path d="M11 5a4 4 0 0 1 0 6M13.5 3a7 7 0 0 1 0 10M16 1a10 10 0 0 1 0 14" /></svg>
                    </TrayIcon>
                    <TrayIcon $width={30}>
                        <svg width="20" height="12" viewBox="0 0 20 12"><rect x=".5" y=".5" width="16" height="11" rx="2" fill="none" stroke="#222" /><rect x="3" y="3" width="7" height="6" fill="#222" /><rect x="17.5" y="4" width="2" height="4" fill="#222" /></svg>
                    </TrayIcon>
                    <ClockBlock>21:21<br />13-05-2022</ClockBlock>
                    <NotifyBadge>7</NotifyBadge>
                </Tray>
            </Taskbar>
        </Page>
    )
}

export default App
